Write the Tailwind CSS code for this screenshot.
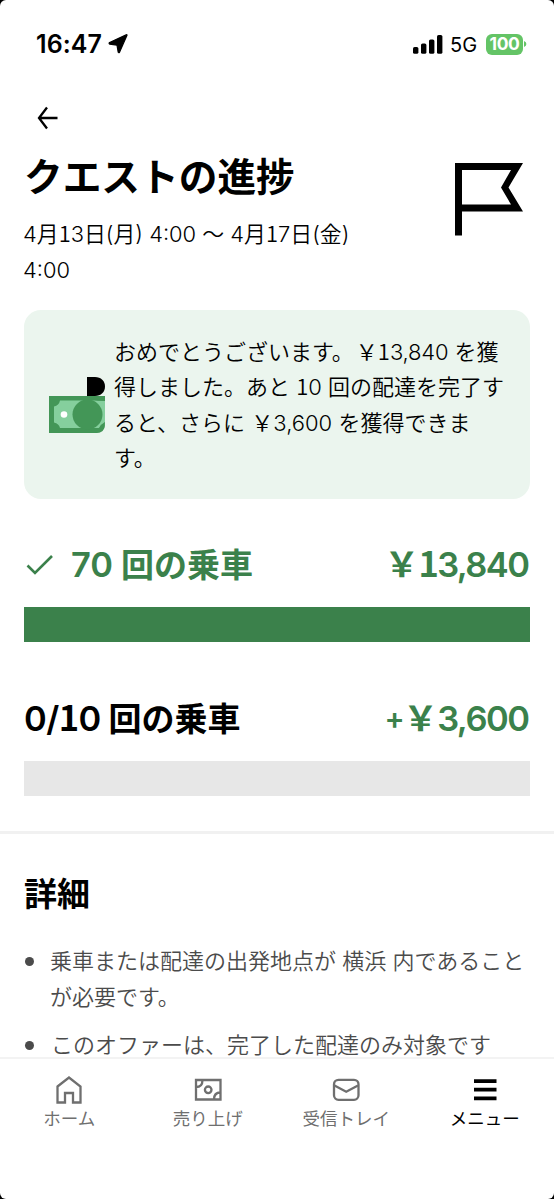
<!DOCTYPE html>
<html lang="ja">
<head>
<meta charset="utf-8">
<title>クエストの進捗</title>
<script src="https://cdn.jsdelivr.net/npm/@tailwindcss/browser@4"></script>
</head>
<body class="bg-black">
<div class="flex h-[1199px] w-[554px] flex-col overflow-hidden rounded-[6px] bg-white font-['Inter','Noto_Sans_CJK_JP',sans-serif] text-black">
  <div class="flex h-[1057px] shrink-0 flex-col">
    <header class="flex h-[88px] shrink-0 items-center pl-9 pr-[27px]">
      <span class="pt-px text-[25px] font-semibold tracking-[0.1px]">16:47</span>
      <svg class="ml-[6px]" width="20" height="20" viewBox="0 0 20 20"><path stroke="#000" stroke-width="1.2" stroke-linejoin="round" d="M19 1.200 11.400 18.400Q10.800 19.200 10.200 18.200L9 11.200 1.600 10.100Q.6 9.300 1.600 8.600L18.200 .8Q19.200 .5 19 1.200Z"/></svg>
      <svg class="ml-auto" width="30" height="19" viewBox="0 0 30 19"><rect x="0" y="12" width="5.4" height="6.8" rx="1.6"/><rect x="8" y="8.4" width="5.4" height="10.4" rx="1.6"/><rect x="16" y="4.4" width="5.4" height="14.4" rx="1.6"/><rect x="24" y="0" width="5.4" height="18.8" rx="1.6"/></svg>
      <span class="ml-[7px] pt-px text-[20px] tracking-[-0.1px]">5G</span>
      <span class="ml-[9px] flex h-[21px] w-[37px] items-center justify-center rounded-[6px] bg-[#64c466] text-[17.5px] font-bold tracking-[-0.4px] text-white">100</span>
      <svg class="ml-[1px]" width="3" height="6" viewBox="0 0 3 6" fill="#64c466"><path d="M0 0Q2.4 1 2.4 3T0 6Z"/></svg>
    </header>

    <div class="flex h-[60px] shrink-0 items-center pl-[37px]">
      <svg width="22" height="24" viewBox="0 0 22 24" fill="none" stroke="#000" stroke-width="2.3"><path d="M20.5 12H2M10 1.5 2 12 10 22.5"/></svg>
    </div>

    <div class="flex shrink-0 justify-between pl-6 pr-[30px]">
      <div>
        <h1 class="h-[58px] whitespace-nowrap text-[38.7px] font-bold leading-[58px]">クエストの進捗</h1>
        <p class="-ml-px mt-[11px] h-[70px] whitespace-nowrap text-[21.9px] font-[350] leading-[35.5px]">4月<span class="font-['Noto_Sans_CJK_JP'] leading-none">1</span>3日(月) 4:00 〜 4月<span class="font-['Noto_Sans_CJK_JP'] leading-none">1</span>7日(金)<br>4:00</p>
      </div>
      <svg class="mt-[15px]" width="70" height="73" viewBox="0 0 70 73"><path fill-rule="evenodd" d="M1 0H69L54.5 24.5 69 48.5H8V72.5H1ZM8 7V41.5H57L47 24.5 57 7Z"/></svg>
    </div>

    <section class="mx-6 mt-[23px] flex h-[189px] shrink-0 items-center rounded-[17px] bg-[#ebf5ee] pl-[25px]">
      <svg class="-mt-px shrink-0" width="56" height="57" viewBox="0 0 56 57">
        <path fill="#439657" d="M0 20H56V48Q56 57 47 57H0Z"/>
        <path fill="#85cf9d" d="M11 24.500H56V46Q56 52 49 52H11Q10 47.500 5 46.500V30.500Q10 29.500 11 24.500Z"/>
        <path fill="#439657" d="M45 24.500Q53 24 56 20V25ZM56 46Q52 48 50 52H45L47 57Q56 57 56 46Z"/>
        <circle cx="38.500" cy="38.500" r="15" fill="#439657"/>
        <circle cx="15" cy="38.500" r="3.300" fill="#fff"/>
        <path d="M38 1H46C52 1 56 5 56 10.500S52 20 46 20H38Z"/>
      </svg>
      <p class="ml-[9px] h-[140px] whitespace-nowrap text-[22px] font-[350] leading-[35.5px]">おめでとうございます。<span class="ml-[2px] font-['Noto_Sans_CJK_JP'] leading-none">￥1</span><span class="tracking-[-0.2px]">3,840</span> を獲<br>得しました。あと <span class="font-['Noto_Sans_CJK_JP'] leading-none">1</span>0 回の配達を完了す<br>ると、さらに ￥3,600 を獲得できま<br>す。</p>
    </section>

    <section class="mt-[42px] shrink-0 px-6">
      <div class="flex h-12 items-center text-[33px] font-bold text-[#3b814b]">
        <svg class="ml-[2px] mr-[17px]" width="28" height="22" viewBox="0 0 28 22" fill="none" stroke="currentColor" stroke-width="2.600"><path d="M1.500 11.500 9 19 26 2"/></svg>
        <span class="whitespace-nowrap pt-[2px]"><span class="text-[34.5px] font-semibold leading-none">70</span> 回の乗車</span>
        <span class="ml-auto whitespace-nowrap text-[34.5px] font-semibold tracking-[-1.6px]"><span class="tracking-[-0.5px]">￥</span><span class="font-['Noto_Sans_CJK_JP'] font-bold leading-none">1</span>3,84<span class="tracking-normal">0</span></span>
      </div>
      <div class="mt-[18px] h-[35px] bg-[#3b814b]"></div>
    </section>

    <section class="mt-[53px] shrink-0 px-6">
      <div class="flex h-12 items-center text-[33px] font-bold">
        <span class="whitespace-nowrap pt-[2px]"><span class="text-[34.5px] font-semibold leading-none tracking-[-0.6px]">0/<span class="font-['Noto_Sans_CJK_JP'] font-bold">1</span>0</span> 回の乗車</span>
        <span class="ml-auto whitespace-nowrap text-[34.5px] font-semibold tracking-[-1.5px] text-[#3b814b]"><span class="inline-block -translate-y-[2px] text-[30px] leading-none">+</span><span class="tracking-[-0.5px]">￥</span>3,60<span class="tracking-normal">0</span></span>
      </div>
      <div class="mt-[18px] h-[35px] bg-[#e7e7e7]"></div>
    </section>

    <div class="mt-[35px] h-[3px] shrink-0 bg-[#f1f1f1]"></div>

    <section class="mt-[35px] shrink-0 px-6">
      <h2 class="h-12 text-[33px] font-bold leading-[50px]">詳細</h2>
      <ul class="mt-[27px] flex flex-col gap-[13px] whitespace-nowrap text-[22px] font-[350] leading-[35.5px] text-[#4b4b4b]">
        <li class="flex"><span class="ml-[1px] mr-[17px] mt-[13px] size-[9px] shrink-0 rounded-full bg-[#4b4b4b]"></span><span class="-ml-px">乗車または配達の出発地点が 横浜 内であること<br>が必要です。</span></li>
        <li class="flex"><span class="ml-[1px] mr-[17px] mt-[13px] size-[9px] shrink-0 rounded-full bg-[#4b4b4b]"></span><span>このオファーは、完了した配達のみ対象です</span></li>
      </ul>
    </section>
  </div>

  <nav class="grid h-[142px] shrink-0 grid-cols-4 border-t-2 border-[#f3f3f3] text-[17.5px] text-[#6f6f6f]">
    <div class="flex flex-col items-center pt-4">
      <svg width="28" height="30" viewBox="0 0 28 30" fill="none" stroke="currentColor" stroke-width="2.300"><path d="M2.500 11.500 14 2.500 25.500 11.500V27.500H18V18H10V27.500H2.500Z"/></svg>
      <span class="leading-[28px]">ホーム</span>
    </div>
    <div class="flex flex-col items-center pt-4">
      <svg width="28" height="30" viewBox="0 0 28 30" fill="none" stroke="currentColor" stroke-width="2.300"><path d="M2 5H26.500V24.500H2ZM2 12C6 12 8.500 9.500 8.500 5M26.500 17.500C22.500 17.500 20 20 20 24.500"/><circle cx="14.200" cy="14.800" r="3.300"/></svg>
      <span class="leading-[28px]">売り上げ</span>
    </div>
    <div class="flex flex-col items-center pt-4">
      <svg width="28" height="30" viewBox="0 0 28 30" fill="none" stroke="currentColor" stroke-width="2.300"><rect x="2" y="4.800" width="24.500" height="20" rx="4.500"/><path d="M2.500 10.500 14.200 16.800 26 10.500"/></svg>
      <span class="leading-[28px]">受信トレイ</span>
    </div>
    <div class="flex flex-col items-center pt-4 text-black">
      <svg width="28" height="30" viewBox="0 0 28 30" fill="currentColor"><path d="M3 4.200H25.500V8H3ZM3 12.800H25.500V16.600H3ZM3 21.400H25.500V25.200H3Z"/></svg>
      <span class="leading-[28px]">メニュー</span>
    </div>
  </nav>
</div>
</body>
</html>
